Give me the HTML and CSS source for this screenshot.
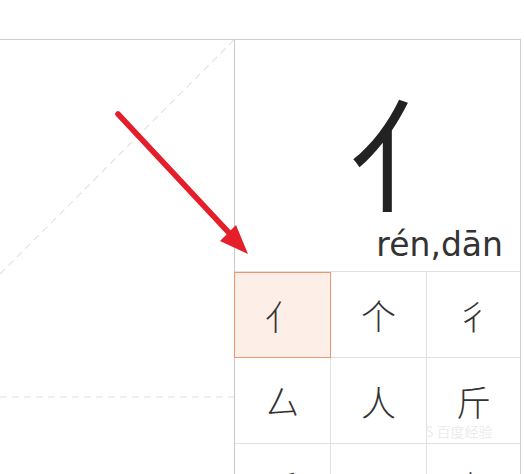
FILE: index.html
```html
<!DOCTYPE html>
<html lang="zh-CN">

<head>
    <meta charset="UTF-8">
    <title>部首 亻</title>
    <link rel="stylesheet" href="styles.css">
</head>

<body>
    <div class="page">
        <div class="board">
            <div class="practice">
                <svg class="guide" width="234" height="440" viewBox="0 0 234 440">
                    <line x1="234" y1="0" x2="-200" y2="434" />
                    <line x1="0" y1="357" x2="234" y2="357" />
                </svg>
            </div>
            <div class="radical">
                <div class="hero">
                    <span class="heroChar">亻</span>
                    <span class="pinyin">rén,dān</span>
                </div>
                <ul class="charList">
                    <li class="charItem active">亻</li>
                    <li class="charItem">个</li>
                    <li class="charItem">彳</li>
                    <li class="charItem">厶</li>
                    <li class="charItem">人</li>
                    <li class="charItem">斤<span class="mark">S 百度经验</span></li>
                    <li class="charItem">千</li>
                    <li class="charItem">丷</li>
                    <li class="charItem">卜</li>
                </ul>
            </div>
        </div>
        <!-- 标注箭头 -->
        <svg class="arrow" width="524" height="474" viewBox="0 0 524 474">
            <line x1="118" y1="114" x2="232" y2="236" />
            <polygon points="248,254 220,241 236,225" />
        </svg>
    </div>
</body>

</html>
```

FILE: styles.css
```css
* {
    box-sizing: border-box;
}

body {
    margin: 0;
    background: #fff;
    font-family: "Noto Sans CJK SC", "Noto Sans", sans-serif;
}

div.page {
    position: relative;
    width: 524px;
    height: 474px;
    overflow: hidden;
    padding-top: 39px;
}

div.board {
    display: flex;
    width: 521px;
    border-top: 1px solid #cbcdcf;
}

div.practice {
    width: 235px;
    height: 440px;
    border-right: 1px solid #c6c8ca;
    overflow: hidden;
}

svg.guide line {
    stroke: #e2e2e2;
    stroke-width: 1.2;
    stroke-dasharray: 7 5;
}

div.radical {
    width: 286px;
    border-right: 1px solid #cbcdcf;
}

div.hero {
    position: relative;
    height: 232px;
    display: flex;
    align-items: center;
    justify-content: center;
    border-bottom: 1px solid #dfe2e5;
}

span.heroChar {
    font-size: 122px;
    line-height: 1;
    color: #222;
    margin-left: 66px;
    margin-top: -14px;
}

span.pinyin {
    position: absolute;
    right: 17px;
    bottom: 13px;
    font-family: "DejaVu Sans", sans-serif;
    font-size: 33px;
    line-height: 0.8;
    color: #333;
}

ul.charList {
    margin: 0;
    padding: 0;
    list-style: none;
    display: grid;
    grid-template-columns: 96px 96px 93px;
    grid-auto-rows: 86px;
}

li.charItem {
    position: relative;
    display: flex;
    align-items: center;
    justify-content: center;
    border-right: 1px solid #dfe2e5;
    border-bottom: 1px solid #dfe2e5;
    font-size: 35px;
    font-weight: 300;
    color: #333;
}

li.charItem:nth-child(3n) {
    border-right: none;
}

li.active {
    margin-left: -1px;
    background: #fdeee7;
    border: 1px solid #f19571;
}

span.mark {
    position: absolute;
    left: -2px;
    bottom: 2px;
    font-size: 14px;
    font-weight: 400;
    color: #ececec;
    white-space: nowrap;
}

svg.arrow {
    position: absolute;
    left: 0;
    top: 0;
    pointer-events: none;
}

svg.arrow line {
    stroke: #e41e2b;
    stroke-width: 5.5;
    stroke-linecap: round;
}

svg.arrow polygon {
    fill: #e41e2b;
}
```
